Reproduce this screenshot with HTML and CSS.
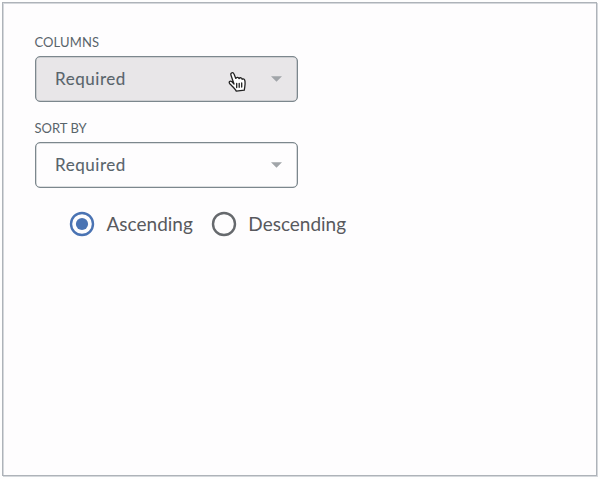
FILE: index.html
```html
<!DOCTYPE html>
<html lang="en">
<head>
<meta charset="utf-8">
<title>Sort options</title>
<link rel="stylesheet" href="styles.css">
</head>
<body>
<main class="panel">
  <section class="field">
    <div class="label label-columns">COLUMNS</div>
    <div class="select select-hover">
      <span>Required</span>
      <svg class="caret" viewBox="0 0 12 6"><path d="M0 0h12L6 6z"/></svg>
      <svg class="cursor" viewBox="0 0 20 22"><path d="M7 13 4 4.2C3 1.5 6.2.8 7 3L8.8 7.4C9.5 5.8 11.6 6 12 7.5 13 6.2 15 6.8 15.2 8.3 16.8 7.4 17.8 8.4 18 10.4 18.5 14.5 17.6 16 17.3 19.2L9.3 20.2C8.3 17.6 5.6 15.5 3 13 1 10.8 3.2 9.2 5 10.8z"/><path d="M9.7 12.5v4M12.2 12.3v4M14.7 12v4"/></svg>
    </div>
  </section>
  <section class="field">
    <div class="label">SORT BY</div>
    <div class="select">
      <span>Required</span>
      <svg class="caret" viewBox="0 0 12 6"><path d="M0 0h12L6 6z"/></svg>
    </div>
  </section>
  <div class="options">
    <div class="option"><svg class="radio radio-on" viewBox="0 0 26 26"><circle class="ring" cx="13" cy="13" r="11"/><circle class="dot" cx="13" cy="13" r="6.1"/></svg><span>Ascending</span></div>
    <div class="option"><svg class="radio" viewBox="0 0 26 26"><circle class="ring" cx="13" cy="13" r="11"/></svg><span>Descending</span></div>
  </div>
</main>
</body>
</html>
```
FILE: styles.css
```css
* { box-sizing: border-box; }
body {
  margin: 0;
  padding: 2px;
  background: #fefefe;
  color: #59646b;
  font-family: Lato, "Liberation Sans", sans-serif;
}
.panel {
  width: 595px;
  height: 474px;
  padding: 31px 31.5px 0;
  border: 1px solid #aeb3b9;
  box-shadow: inset 1px 1px #d5d8dc, 1px 1px #d5d8dc;
  background: #fefdfe;
}
.field { width: 263px; margin-bottom: 18px; }
.label { height: 22px; font-size: 13px; line-height: 17px; }
.label-columns { letter-spacing: .1px; }
.select {
  position: relative;
  display: flex;
  align-items: center;
  justify-content: space-between;
  height: 46px;
  padding: 0 15px 1px 19.5px;
  border: 1px solid #7c878d;
  border-radius: 5px;
  box-shadow: inset 0 0 0 .3px #7c878d;
  font-size: 17px;
  letter-spacing: .55px;
  -webkit-text-stroke: .1px #59646b;
}
.select-hover { background: #e8e6e8; }
.caret { width: 11px; height: 6px; margin-top: 1px; fill: #a1a5a9; }
.cursor {
  position: absolute;
  left: 191px;
  top: 14px;
  width: 20px;
  height: 22px;
  fill: #fff;
  stroke: #222;
  stroke-width: 1.3;
  stroke-linejoin: round;
  stroke-linecap: round;
}
.options { display: flex; gap: 18px; padding-left: 34.5px; margin-top: 23px; }
.option { display: flex; align-items: center; gap: 11.5px; height: 26px; font-size: 19px; color: #58595d; }
.option span { padding-bottom: 2px; }
.radio { width: 26px; height: 26px; }
.ring { fill: none; stroke: #66696d; stroke-width: 2.4; }
.radio-on .ring { stroke: #4a73b3; }
.dot { fill: #4a73b3; }
```
